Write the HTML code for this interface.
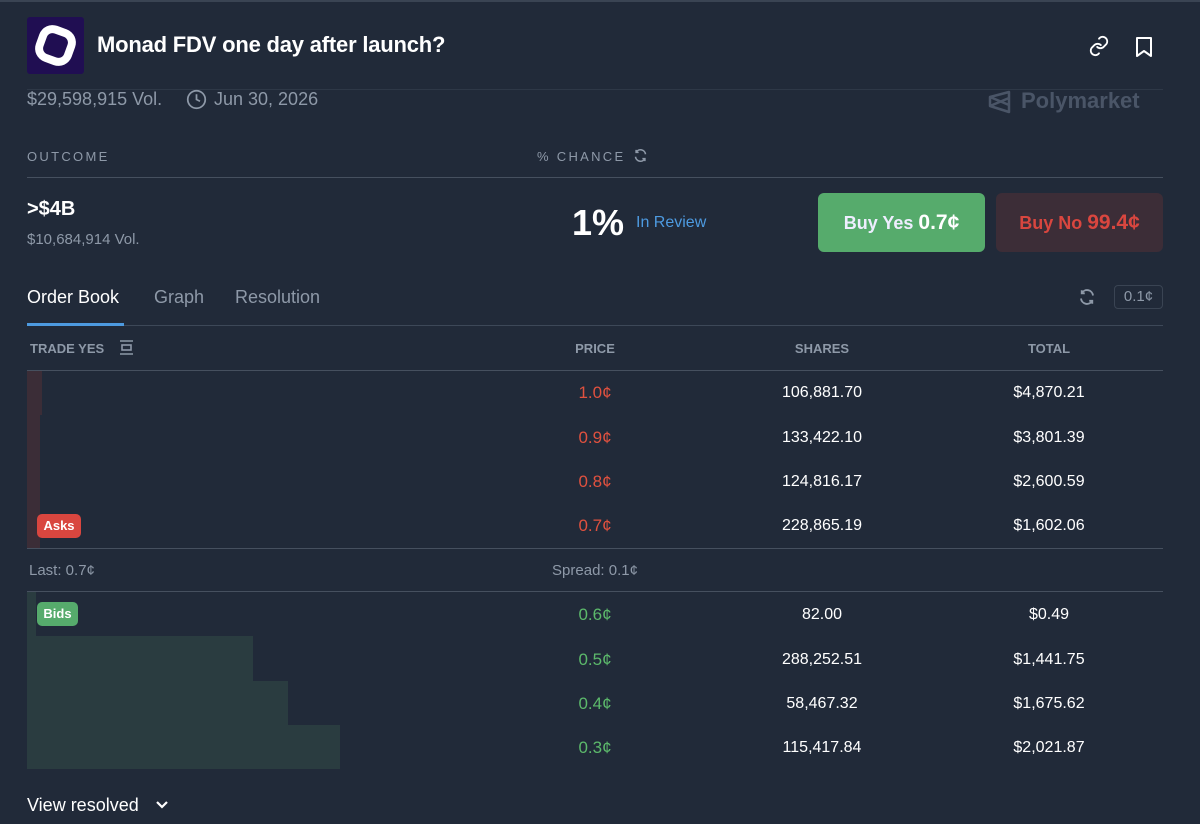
<!DOCTYPE html>
<html><head><meta charset="utf-8"><style>
*{margin:0;padding:0;box-sizing:border-box}
body{width:1200px;height:824px;background:#212a39;font-family:"Liberation Sans",sans-serif;position:relative;overflow:hidden;color:#fff}
.a{position:absolute;white-space:nowrap}
.line{position:absolute;height:1px;background:#3d4858}
.c{transform:translateX(-50%);text-align:center}
.pr{font-size:17px}
.red{color:#e0513f}.grn{color:#5cb96b}
.num{font-size:16px;color:#fff}
.hdr{font-size:13px;color:#8e99a8;font-weight:bold}
</style></head><body>
<div class="line" style="left:0;top:0;width:1200px;height:2px;background:#3a4453"></div>
<div class="a" style="left:27px;top:17px;width:57px;height:57px;background:#200e52;border-radius:3px"></div>
<svg class="a" style="left:27px;top:17px" width="57" height="57" viewBox="0 0 57 57"><rect x="9.5" y="9.5" width="38" height="38" rx="14" transform="rotate(20 28.5 28.5)" fill="#fff"/><rect x="17.5" y="17.5" width="22" height="22" rx="6" transform="rotate(20 28.5 28.5)" fill="#200e52"/></svg>
<div class="a" style="left:97px;top:32px;font-size:22px;font-weight:bold;color:#fff;letter-spacing:-0.2px">Monad FDV one day after launch?</div>
<svg class="a" style="left:1088px;top:35px" width="22" height="22" viewBox="0 0 24 24" fill="none" stroke="#fff" stroke-width="2" stroke-linecap="round"><path d="M10 13a5 5 0 0 0 7 0l3-3a5 5 0 0 0-7-7l-1 1"/><path d="M14 11a5 5 0 0 0-7 0l-3 3a5 5 0 0 0 7 7l1-1"/></svg>
<svg class="a" style="left:1134px;top:36px" width="20" height="22" viewBox="0 0 20 22" fill="none" stroke="#fff" stroke-width="2" stroke-linejoin="round"><path d="M3 2h14v18l-7-5-7 5z"/></svg>
<div class="line" style="left:27px;top:89px;width:1136px;background:#2e3847"></div>
<div class="a" style="left:27px;top:89px;font-size:18px;color:#8e99a8">$29,598,915 Vol.</div>
<svg class="a" style="left:186px;top:89px" width="21" height="21" viewBox="0 0 24 24" fill="none" stroke="#8e99a8" stroke-width="2"><circle cx="12" cy="12" r="10"/><path d="M12 6v6l4 2"/></svg>
<div class="a" style="left:214px;top:89px;font-size:18px;color:#8e99a8">Jun 30, 2026</div>
<svg class="a" style="left:987px;top:89px" width="25" height="25" viewBox="0 0 25 25" fill="none" stroke="#4a5567" stroke-width="2.5" stroke-linejoin="round"><path d="M22 3L3 8v9l19 6z M3 8l19 8 M3 17l19-8"/></svg>
<div class="a" style="left:1021px;top:88px;font-size:22px;font-weight:bold;color:#4a5567">Polymarket</div>
<div class="a" style="left:27px;top:149px;font-size:13px;letter-spacing:2.3px;color:#8e99a8">OUTCOME</div>
<div class="a" style="left:537px;top:149px;font-size:13px;letter-spacing:2.3px;color:#8e99a8">% CHANCE</div>
<svg class="a" style="left:633px;top:148px" width="15" height="15" viewBox="0 0 24 24" fill="none" stroke="#8e99a8" stroke-width="2.5"><path d="M20 10A8 8 0 0 0 5 7M4 14a8 8 0 0 0 15 3"/><path d="M5 3v4h4M19 21v-4h-4"/></svg>
<div class="line" style="left:27px;top:177px;width:1136px;background:#46505f"></div>
<div class="a" style="left:27px;top:198px;font-size:20px;font-weight:bold">&gt;$4B</div>
<div class="a" style="left:27px;top:231px;font-size:15px;color:#8e99a8">$10,684,914 Vol.</div>
<div class="a" style="left:572px;top:202px;font-size:36px;font-weight:bold">1%</div>
<div class="a" style="left:636px;top:214px;font-size:16px;color:#4d9ae0">In Review</div>
<div class="a" style="left:818px;top:193px;width:167px;height:59px;background:#56ab6c;border-radius:6px;text-align:center;line-height:59px;font-size:18px;color:#eef;font-weight:bold">Buy Yes <b style="font-size:21px;color:#fff">0.7¢</b></div>
<div class="a" style="left:996px;top:193px;width:167px;height:59px;background:#3c2d37;border-radius:6px;text-align:center;line-height:59px;font-size:18px;color:#d9463f;font-weight:bold">Buy No <b style="font-size:21px">99.4¢</b></div>
<div class="a" style="left:27px;top:287px;font-size:18px;color:#fff">Order Book</div>
<div class="a" style="left:154px;top:287px;font-size:18px;color:#8e99a8">Graph</div>
<div class="a" style="left:235px;top:287px;font-size:18px;color:#8e99a8">Resolution</div>
<svg class="a" style="left:1078px;top:288px" width="18" height="18" viewBox="0 0 24 24" fill="none" stroke="#8e99a8" stroke-width="2.5"><path d="M20 10A8 8 0 0 0 5 7M4 14a8 8 0 0 0 15 3"/><path d="M5 3v4h4M19 21v-4h-4"/></svg>
<div class="a" style="left:1114px;top:285px;width:49px;height:24px;border:1px solid #3a4453;border-radius:4px;text-align:center;line-height:22px;font-size:15px;color:#8e99a8">0.1¢</div>
<div class="line" style="left:27px;top:325px;width:1136px;background:#3d4858"></div>
<div class="a" style="left:27px;top:323px;width:97px;height:3px;background:#4d9ae0"></div>
<div class="a hdr" style="left:30px;top:341px">TRADE YES</div>
<svg class="a" style="left:119px;top:340px" width="15" height="15" viewBox="0 0 15 15" fill="none" stroke="#8e99a8" stroke-width="1.6"><path d="M1 1h13M1 14h13"/><rect x="3" y="5" width="9" height="5"/></svg>
<div class="a hdr c" style="left:595px;top:341px">PRICE</div>
<div class="a hdr c" style="left:822px;top:341px">SHARES</div>
<div class="a hdr c" style="left:1049px;top:341px">TOTAL</div>
<div class="line" style="left:27px;top:370px;width:1136px;background:#46505f"></div>
<div class="a" style="left:27px;top:371px;width:15px;height:44px;background:#3b2d37"></div>
<div class="a" style="left:27px;top:415px;width:13px;height:133px;background:#3b2d37"></div>
<div class="a" style="left:37px;top:514px;width:44px;height:24px;background:#d9463f;border-radius:5px;font-size:13px;font-weight:bold;text-align:center;line-height:24px">Asks</div>
<div class="a pr red c" style="left:595px;top:383px">1.0¢</div><div class="a num c" style="left:822px;top:384px">106,881.70</div><div class="a num c" style="left:1049px;top:384px">$4,870.21</div>
<div class="a pr red c" style="left:595px;top:428px">0.9¢</div><div class="a num c" style="left:822px;top:429px">133,422.10</div><div class="a num c" style="left:1049px;top:429px">$3,801.39</div>
<div class="a pr red c" style="left:595px;top:472px">0.8¢</div><div class="a num c" style="left:822px;top:473px">124,816.17</div><div class="a num c" style="left:1049px;top:473px">$2,600.59</div>
<div class="a pr red c" style="left:595px;top:516px">0.7¢</div><div class="a num c" style="left:822px;top:517px">228,865.19</div><div class="a num c" style="left:1049px;top:517px">$1,602.06</div>
<div class="line" style="left:27px;top:548px;width:1136px;background:#46505f"></div>
<div class="a" style="left:29px;top:562px;font-size:15px;color:#8e99a8">Last: 0.7¢</div>
<div class="a c" style="left:595px;top:562px;font-size:15px;color:#8e99a8">Spread: 0.1¢</div>
<div class="line" style="left:27px;top:591px;width:1136px;background:#46505f"></div>
<div class="a" style="left:27px;top:592px;width:9px;height:44px;background:#2a3c40"></div>
<div class="a" style="left:27px;top:636px;width:226px;height:45px;background:#2a3c40"></div>
<div class="a" style="left:27px;top:681px;width:261px;height:44px;background:#2a3c40"></div>
<div class="a" style="left:27px;top:725px;width:313px;height:44px;background:#2a3c40"></div>
<div class="a" style="left:37px;top:602px;width:41px;height:24px;background:#56ab6c;border-radius:5px;font-size:13px;font-weight:bold;text-align:center;line-height:24px">Bids</div>
<div class="a pr grn c" style="left:595px;top:605px">0.6¢</div><div class="a num c" style="left:822px;top:606px">82.00</div><div class="a num c" style="left:1049px;top:606px">$0.49</div>
<div class="a pr grn c" style="left:595px;top:650px">0.5¢</div><div class="a num c" style="left:822px;top:651px">288,252.51</div><div class="a num c" style="left:1049px;top:651px">$1,441.75</div>
<div class="a pr grn c" style="left:595px;top:694px">0.4¢</div><div class="a num c" style="left:822px;top:695px">58,467.32</div><div class="a num c" style="left:1049px;top:695px">$1,675.62</div>
<div class="a pr grn c" style="left:595px;top:738px">0.3¢</div><div class="a num c" style="left:822px;top:739px">115,417.84</div><div class="a num c" style="left:1049px;top:739px">$2,021.87</div>
<div class="a" style="left:27px;top:795px;font-size:18px;color:#fff">View resolved</div>
<svg class="a" style="left:155px;top:799px" width="14" height="12" viewBox="0 0 14 12" fill="none" stroke="#fff" stroke-width="2.2"><path d="M2 3l5 5 5-5"/></svg>
</body></html>
